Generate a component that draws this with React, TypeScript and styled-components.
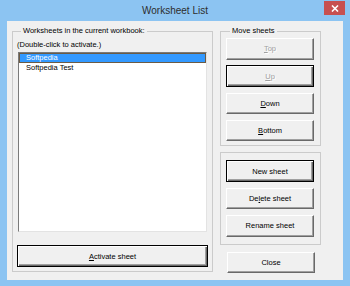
import React from "react";
import styled, { createGlobalStyle } from "styled-components";

const FONT = `"Liberation Sans", Arial, sans-serif`;

const GlobalStyle = createGlobalStyle`
  html, body { margin: 0; padding: 0; }
  body { background: #8cc4f2; font-family: ${FONT}; }
`;

const Window = styled.div`
  width: 350px;
  height: 286px;
  box-sizing: border-box;
  background: #8cc4f2;
  display: flex;
  flex-direction: column;
`;

const TitleBar = styled.div`
  height: 21px;
  flex: none;
  display: grid;
  grid-template-columns: 1fr auto 1fr;
  align-items: start;
`;

const Title = styled.div`
  grid-column: 2;
  font-size: 10px;
  line-height: 21px;
  color: #2e2e2e;
`;

const CloseBox = styled.div`
  grid-column: 3;
  justify-self: end;
  margin: 1px 5px 0 0;
  width: 21px;
  height: 14px;
  background: #c75050;
  display: flex;
  align-items: center;
  justify-content: center;
`;

const Client = styled.div`
  flex: 1;
  margin: 0 7px 6px 7px;
  background: #f0f0f0;
  display: flex;
  align-items: flex-start;
  gap: 7px;
  padding: 5px 0 0 5px;
`;

const Group = styled.fieldset`
  margin: 0;
  min-width: 0;
  box-sizing: border-box;
  border: 1px solid #cbcbcb;
`;

const Legend = styled.legend`
  padding: 0 2px;
  margin-left: 4px;
  font-size: 7.5px;
  line-height: 10px;
  color: #000;
`;

const SheetsGroup = styled(Group)`
  width: 201px;
  height: 246px;
  padding: 4px 4px 4px 4px;
  display: flex;
  flex-direction: column;
`;

const Hint = styled.div`
  font-size: 7.5px;
  line-height: 10px;
  color: #000;
`;

const ListBox = styled.ul`
  list-style: none;
  margin: 2px 1px 0 1px;
  padding: 0;
  height: 180px;
  box-sizing: border-box;
  background: #fff;
  border: 1px solid;
  border-color: #7a7a7a #e3e3e3 #e3e3e3 #7a7a7a;
`;

const Item = styled.li<{ $selected?: boolean }>`
  height: 10px;
  box-sizing: border-box;
  padding-left: 6px;
  font-size: 7.5px;
  line-height: 8px;
  color: ${(p) => (p.$selected ? "#fff" : "#000")};
  background: ${(p) => (p.$selected ? "#3399ff" : "transparent")};
  border: 1px solid ${(p) => (p.$selected ? "#6b5b45" : "transparent")};
`;

const RightColumn = styled.div`
  width: 101px;
  display: flex;
  flex-direction: column;
  gap: 6px;
`;

const ButtonStack = styled(Group)`
  display: flex;
  flex-direction: column;
  gap: 5.7px;
  padding: ${(p: { $top: number; $bottom: number }) => `${p.$top}px 6px ${p.$bottom}px 5px`};
`;

const Btn = styled.button<{ $default?: boolean; $h?: number }>`
  display: flex;
  align-items: center;
  justify-content: center;
  width: 100%;
  height: ${(p) => p.$h ?? 21.6}px;
  box-sizing: border-box;
  margin: 0;
  padding: 0;
  font-family: ${FONT};
  font-size: 7.5px;
  color: #000;
  background: #f0f0f0;
  border: 1px solid;
  border-color: ${(p) => (p.$default ? "#000" : "#fff #696969 #696969 #fff")};
  box-shadow: ${(p) =>
    p.$default
      ? "inset 1px 1px 0 #fff, inset -1px -1px 0 #696969, inset -2px -2px 0 #a0a0a0"
      : "inset -1px -1px 0 #a0a0a0"};
  &:disabled {
    color: #a0a0a0;
    text-shadow: 1px 1px 0 #fff;
  }
`;

const ActivateBtn = styled(Btn)`
  margin-top: 13px;
  height: 22px;
`;

const CloseBtn = styled(Btn)`
  margin: 0.5px 6px 0 7px;
  width: auto;
`;

export default function App() {
  return (
    <>
      <GlobalStyle />
      <Window>
        <TitleBar>
          <Title>Worksheet List</Title>
          <CloseBox>
            <svg width="8" height="7" viewBox="0 0 8 7">
              <path d="M1 0.5 L7 6.5 M7 0.5 L1 6.5" stroke="#fff" strokeWidth="1.6" />
            </svg>
          </CloseBox>
        </TitleBar>
        <Client>
          <SheetsGroup>
            <Legend>Worksheets in the current workbook:</Legend>
            <Hint>(Double-click to activate.)</Hint>
            <ListBox>
              <Item $selected>Softpedia</Item>
              <Item>Softpedia Test</Item>
            </ListBox>
            <ActivateBtn $default>
              <span><u>A</u>ctivate sheet</span>
            </ActivateBtn>
          </SheetsGroup>
          <RightColumn>
            <ButtonStack $top={2} $bottom={4}>
              <Legend>Move sheets</Legend>
              <Btn disabled><span><u>T</u>op</span></Btn>
              <Btn disabled $default><span><u>U</u>p</span></Btn>
              <Btn><span><u>D</u>own</span></Btn>
              <Btn><span><u>B</u>ottom</span></Btn>
            </ButtonStack>
            <ButtonStack as="div" $top={7} $bottom={7.5}>
              <Btn $default>New sheet</Btn>
              <Btn><span>De<u>l</u>ete sheet</span></Btn>
              <Btn>Rename sheet</Btn>
            </ButtonStack>
            <CloseBtn>Close</CloseBtn>
          </RightColumn>
        </Client>
      </Window>
    </>
  );
}
